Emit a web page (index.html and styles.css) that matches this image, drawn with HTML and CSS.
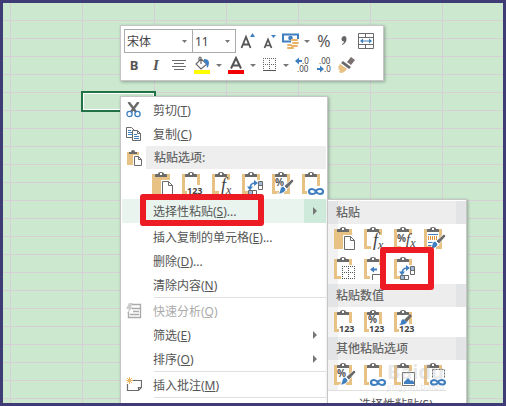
FILE: index.html
```html
<!DOCTYPE html>
<html lang="zh-CN">

<head>
    <meta charset="UTF-8">
    <meta name="viewport" content="width=device-width, initial-scale=1.0">
    <title>选择性粘贴</title>
    <link rel="stylesheet" href="styles.css">
</head>

<body>
    <!-- Shared icon parts -->
    <svg class="defs" width="0" height="0" aria-hidden="true">
        <symbol id="board" viewBox="0 0 24 24">
            <path d="M5 3.500H1.500V20.500H7M13 3.500H16.500V20.500H12" fill="none" stroke="#e8c184" stroke-width="3" />
            <rect x="3" y="5" width="12" height="14" fill="#fff" />
            <path d="M3 5V3q0-1 1-1h2q0-2 3-2t3 2h2q1 0 1 1v2z" fill="#6a6a6a" />
            <rect x="8" y="1" width="2" height="2" fill="#fff" />
        </symbol>
        <symbol id="paste" viewBox="0 0 24 24">
            <path d="M0 2h18v20H0z" fill="#e8c184" />
            <path d="M3 5V3q0-1 1-1h2q0-2 3-2t3 2h2q1 0 1 1v2z" fill="#6a6a6a" />
            <rect x="8" y="1" width="2" height="2" fill="#fff" />
            <path d="M9 8h12v16H9z" fill="#fff" />
            <path d="M10.500 9.500h6l4 4v9h-10zM16.500 9.500v4h4" fill="#fff" stroke="#6a6a6a" />
        </symbol>
        <symbol id="transpose" viewBox="0 0 24 24">
            <use href="#board" />
            <path d="M6 8h16v16H6z" fill="#fff" />
            <path d="M8 17q0-6 5-6" fill="none" stroke="#3f7fbf" stroke-width="1.600" />
            <path d="M5 14.500h6l-3 4zM12 8v6l4-3z" fill="#3f7fbf" />
            <path d="M16.500 9.500h4v8h-4zM6.500 18.500h8v4h-8z" fill="#fff" stroke="#6a6a6a" />
            <path d="M17 10h3v3h-3zM7 19h3v3H7z" fill="#9dbbd8" />
            <path d="M16.500 13.500h4M10.500 18.500v4" stroke="#6a6a6a" />
        </symbol>
        <symbol id="brush" viewBox="0 0 24 24">
            <path d="M20 7l2 2-7 8-3-3z" fill="#6a6a6a" stroke="#fff" stroke-width=".8" />
            <path d="M11 14l3 3q-1 5-9 5 3-1 3-4 0-3 3-4z" fill="#3f7fbf" stroke="#fff" stroke-width=".8" />
        </symbol>
        <symbol id="link" viewBox="0 0 24 24">
            <use href="#board" />
            <path d="M5 14h17v10H5z" fill="#fff" />
            <path d="M14 20.500q-1.500 1.500-4 1.500-3 0-3-2.500T10 17q2 0 4 2.500 1.500 2.500 4 2.500 3 0 3-2.500T18 17q-2.500 0-4 1.500" fill="none" stroke="#3f7fbf" stroke-width="2.200" />
        </symbol>
        <symbol id="keep-source" viewBox="0 0 24 24">
            <use href="#board" />
            <path d="M4 7.500h10M4 15.500h8M4 18.500h5" stroke="#3f7fbf" />
            <path d="M4 10h10M4 12h10" stroke="#e0923a" stroke-width="2" stroke-dasharray="1 1" />
            <use href="#brush" />
        </symbol>
        <symbol id="no-border" viewBox="0 0 24 24">
            <use href="#board" />
            <path d="M7 8h15v16H7z" fill="#fff" />
            <path d="M8 9.500h13M8 15.500h13M8 21.500h13M8.500 9v13M14.500 9v13M20.500 9v13" stroke="#555" stroke-dasharray="1 1" />
        </symbol>
        <symbol id="col-width" viewBox="0 0 24 24">
            <use href="#board" />
            <path d="M6 8h16v16H6z" fill="#fff" />
            <path d="M8 12.500h5M16 12.500h5" stroke="#3f7fbf" stroke-width="2" />
            <path d="M6 12.500l4-3v6zM22 12.500l-4-3v6z" fill="#3f7fbf" />
            <path d="M8.500 23v-5.500h12V23" fill="none" stroke="#6a6a6a" />
        </symbol>
        <symbol id="small-brush" viewBox="0 0 24 24">
            <path d="M16 4l2 2-5 6-3-2z" fill="#6a6a6a" />
            <path d="M9 9l4 3q-1 3-8 3 2-1 2-3 0-2 2-3z" fill="#3f7fbf" />
        </symbol>
        <symbol id="picture" viewBox="0 0 24 24">
            <use href="#board" />
            <path d="M7 8h14v16H7z" fill="#fff" />
            <path d="M8.500 9.500h12v13h-12z" fill="#fff" stroke="#6a6a6a" />
            <path d="M10 21v-2l4-4 3 3 1-1 2 2v2z" fill="#3f7fbf" />
        </symbol>
        <symbol id="picture-link" viewBox="0 0 24 24">
            <use href="#board" />
            <path d="M8.500 6.500h12v10h-12z" fill="#fff" stroke="#6a6a6a" stroke-dasharray="2 1" />
            <path d="M5 15h17v9H5z" fill="#fff" />
            <path d="M14 20q-1.500 1.500-4 1.500-3 0-3-2T10 17q2 0 4 2.200 1.500 2.300 4 2.300 3 0 3-2T18 17q-2.500 0-4 1.500" fill="none" stroke="#3f7fbf" stroke-width="2.200" />
        </symbol>
    </svg>

    <main class="sheet">
        <div class="active-cell"></div>

        <div class="toolbar">
            <div class="toolbar-row">
                <select class="font-name" aria-label="字体">
                    <option>宋体</option>
                </select>
                <select class="font-size" aria-label="字号">
                    <option>11</option>
                </select>
                <button class="w24" aria-label="增大字号">
                    <svg width="16" height="18" viewBox="0 0 16 18"><path d="M1.500 16L6 5 10.500 16M3.500 12.500h5" fill="none" stroke="#555" stroke-width="1.800" /><path d="M10 5l2.500-4L15 5z" fill="#3f7fbf" /></svg>
                </button>
                <button class="w20" aria-label="减小字号">
                    <svg width="16" height="18" viewBox="0 0 16 18"><path d="M2.500 16L6 7.500 9.500 16M4 13.500h4" fill="none" stroke="#555" stroke-width="1.700" /><path d="M9 3h5l-2.500 3z" fill="#3f7fbf" /></svg>
                </button>
                <button class="w22" aria-label="会计数字格式">
                    <svg width="18" height="18" viewBox="0 0 18 18"><path d="M1 2.500h15v7H1z" fill="#fff" stroke="#3f7fbf" stroke-width="2" /><circle cx="8.500" cy="6" r="2.300" fill="#3f7fbf" /><path d="M9 7h8v11H4v-6h5z" fill="#fff" /><g fill="#e8b365"><rect x="9" y="7" width="7" height="2" rx="1" /><rect x="10" y="10" width="7" height="2" rx="1" /><rect x="9" y="13" width="7" height="2" rx="1" /><rect x="5" y="12" width="5" height="2" rx="1" /><rect x="5" y="15" width="7" height="2" rx="1" /></g></svg>
                </button>
                <button class="w10 caret" aria-label="更多货币"></button>
                <button class="w24 sign">%</button>
                <button class="w16" aria-label="千位分隔">
                    <svg width="8" height="12" viewBox="0 0 8 12"><path d="M4 1q2.500 0 2.500 3Q6.500 8 2 10V9q2-1 2-2.500Q1.500 6.500 1.500 4T4 1z" fill="#666" /></svg>
                </button>
                <button class="w28" aria-label="合并后居中">
                    <svg width="16" height="16" viewBox="0 0 16 16"><path d="M.5.5h15v15H.5zM.5 4.500h15M.5 11.500h15M7.500.5v4M7.500 11.500v4" fill="none" stroke="#6a6a6a" /><path d="M2 8l3-2.500v2h6v-2L14 8l-3 2.500v-2H5v2z" fill="#3f7fbf" /></svg>
                </button>
            </div>
            <div class="toolbar-row">
                <button class="w20 bold">B</button>
                <button class="w24 italic">I</button>
                <button class="w22" aria-label="居中">
                    <svg width="14" height="12" viewBox="0 0 14 12"><path d="M0 1.500h14M2 4.500h10M0 7.500h14M2 10.500h10" stroke="#6a6a6a" /></svg>
                </button>
                <button class="w24" aria-label="填充颜色">
                    <svg width="16" height="18" viewBox="0 0 16 18"><path d="M7 3l6 5-6 5-5-5zM7 8V1.500q-2-1-2 1V6" fill="#fff" stroke="#6a6a6a" stroke-width="1.200" /><path d="M10 3q5 0 5 4 0 3-2 5 0-4-3-6z" fill="#3f7fbf" /><path d="M0 14h16v4H0z" fill="#ff0" /></svg>
                </button>
                <button class="w10 caret" aria-label="更多填充颜色"></button>
                <button class="w24" aria-label="字体颜色">
                    <svg width="16" height="18" viewBox="0 0 16 18"><path d="M3 12.500L8 2l5 10.500M5 9.500h6" fill="none" stroke="#555" stroke-width="2" /><path d="M0 14h16v4H0z" fill="#f00000" /></svg>
                </button>
                <button class="w10 caret" aria-label="更多字体颜色"></button>
                <button class="w22" aria-label="边框">
                    <svg width="13" height="14" viewBox="0 0 13 14"><path d="M0 .5h13M0 6.500h13M.5 0v12M6.500 0v12M12.500 0v12" stroke="#666" stroke-dasharray="1 1" /><path d="M0 12.500h13" stroke="#555" /></svg>
                </button>
                <button class="w12 caret" aria-label="更多边框"></button>
                <button class="w22" aria-label="增加小数位数">
                    <svg width="18" height="16" viewBox="0 0 18 16"><path d="M4 4h4" stroke="#3f7fbf" stroke-width="2" /><path d="M1 4l4-3.500v7z" fill="#3f7fbf" /><text x="8" y="7" class="decimals">.0</text><text x="3" y="15" class="decimals">.00</text></svg>
                </button>
                <button class="w22" aria-label="减少小数位数">
                    <svg width="18" height="16" viewBox="0 0 18 16"><path d="M1 12h4" stroke="#3f7fbf" stroke-width="2" /><path d="M8 12L4 8.500v7z" fill="#3f7fbf" /><text x="3" y="7" class="decimals">.00</text><text x="8" y="15" class="decimals">.0</text></svg>
                </button>
                <button class="w22" aria-label="格式刷">
                    <svg width="18" height="16" viewBox="0 0 18 16"><path d="M13 0l4 3-4 5-4-3z" fill="#7a7070" /><path d="M5 4l8 6-2 2-8-6z" fill="#6a6a6a" /><path d="M2 7l7 5q-3 4-6 4l-2-1 1-2-2-1 1-1-1-1q1-1 2-3z" fill="#e8c184" /></svg>
                </button>
            </div>
        </div>

        <div class="menu">
            <button class="item">
                <span class="icon"><svg width="16" height="16" viewBox="0 0 16 16"><path d="M2.500 0L10 10M12.500 0L5 10" stroke="#6a6a6a" stroke-width="2.400" /><circle cx="3.500" cy="12" r="2.600" fill="#fff" stroke="#3f7fbf" stroke-width="1.300" /><circle cx="11.500" cy="12" r="2.600" fill="#fff" stroke="#3f7fbf" stroke-width="1.300" /></svg></span>
                <span>剪切(<u>T</u>)</span>
            </button>
            <button class="item">
                <span class="icon"><svg width="16" height="16" viewBox="0 0 16 16"><path d="M.5 1.500h5l3 3v7h-8z" fill="#fff" stroke="#6a6a6a" /><path d="M2 4.500h3M2 6.500h4M2 8.500h4" stroke="#3f7fbf" /><path d="M6.500 4.500h5l3 3v7h-8zM11.500 4.500v3h3" fill="#fff" stroke="#6a6a6a" /><path d="M8 8.500h3M8 10.500h5M8 12.500h5" stroke="#3f7fbf" /></svg></span>
                <span>复制(<u>C</u>)</span>
            </button>
            <div class="item paste-title">
                <span class="icon"><svg width="16" height="16" viewBox="0 0 16 16"><path d="M1 2h12v13H1z" fill="#e8c184" /><path d="M3 4V2h2q0-2 2-2t2 2h2v2z" fill="#6a6a6a" /><path d="M7 5h9v11H7z" fill="#fff" /><path d="M8.500 6.500h4l3 3v6h-7zM12.500 6.500v3h3" fill="#fff" stroke="#6a6a6a" /></svg></span>
                <span class="label">粘贴选项:</span>
            </div>
            <div class="icon-row">
                <button aria-label="粘贴"><svg><use href="#paste" /></svg></button>
                <button aria-label="值"><svg><use href="#board" /><path d="M5 13h17v11H5z" fill="#fff" /><text x="5" y="22" class="digits">123</text></svg></button>
                <button aria-label="公式"><svg><use href="#board" /><path d="M8 8h14v16H8z" fill="#fff" /><text x="9" y="19" class="fx">f<tspan dy="3" class="fx-small">x</tspan></text></svg></button>
                <button aria-label="转置"><svg><use href="#transpose" /></svg></button>
                <button aria-label="格式"><svg><use href="#board" /><text x="3" y="14" class="percent">%</text><use href="#brush" /></svg></button>
                <button aria-label="粘贴链接"><svg><use href="#link" /></svg></button>
            </div>
            <button class="item selected">
                <span class="icon"></span>
                <span>选择性粘贴(<u>S</u>)...</span>
                <span class="arrow"></span>
            </button>
            <button class="item"><span class="icon"></span><span>插入复制的单元格(<u>E</u>)...</span></button>
            <button class="item"><span class="icon"></span><span>删除(<u>D</u>)...</span></button>
            <button class="item"><span class="icon"></span><span>清除内容(<u>N</u>)</span></button>
            <hr>
            <button class="item" disabled>
                <span class="icon"><svg width="16" height="16" viewBox="0 0 16 16"><path d="M6 1.500h8.500v13h-12V9M6 5.500h8M7 8.500h6M4 11.500h9" fill="none" stroke="#aaa" stroke-width="1.400" /><path d="M3 0h4L5 4h2L1 11l2-5H0z" fill="#ccc" /></svg></span>
                <span>快速分析(<u>Q</u>)</span>
            </button>
            <button class="item"><span class="icon"></span><span>筛选(<u>E</u>)</span><span class="arrow"></span></button>
            <button class="item"><span class="icon"></span><span>排序(<u>O</u>)</span><span class="arrow"></span></button>
            <hr>
            <button class="item">
                <span class="icon"><svg width="16" height="16" viewBox="0 0 16 16"><path d="M7 3.500h8.500v7l-3 3H1.500V7M15.500 10.500h-3v3" fill="none" stroke="#6a6a6a" stroke-width="1.200" /><path d="M3.500 0v7M0 3.500h7M1 1l5 5M6 1L1 6" stroke="#e8b365" /></svg></span>
                <span>插入批注(<u>M</u>)</span>
            </button>
            <hr>
        </div>

        <div class="submenu">
            <h2>粘贴</h2>
            <div class="icon-row">
                <button aria-label="粘贴"><svg><use href="#paste" /></svg></button>
                <button aria-label="公式"><svg><use href="#board" /><path d="M8 8h14v16H8z" fill="#fff" /><text x="9" y="19" class="fx">f<tspan dy="3" class="fx-small">x</tspan></text></svg></button>
                <button aria-label="公式和数字格式"><svg><use href="#board" /><path d="M14 8h8v16h-8z" fill="#fff" /><text x="3" y="15" class="percent">%<tspan dy="2" class="fx-mid">f</tspan><tspan dy="3" class="fx-small">x</tspan></text></svg></button>
                <button aria-label="保留源格式"><svg><use href="#keep-source" /></svg></button>
                <button aria-label="无边框"><svg><use href="#no-border" /></svg></button>
                <button aria-label="保留源列宽"><svg><use href="#col-width" /></svg></button>
                <button aria-label="转置"><svg><use href="#transpose" /></svg></button>
            </div>
            <h2>粘贴数值</h2>
            <div class="icon-row">
                <button aria-label="值"><svg><use href="#board" /><path d="M5 13h17v11H5z" fill="#fff" /><text x="5" y="22" class="digits">123</text></svg></button>
                <button aria-label="值和数字格式"><svg><use href="#board" /><path d="M5 14h17v10H5z" fill="#fff" /><text x="4" y="13" class="percent">%</text><text x="5" y="22" class="digits">123</text></svg></button>
                <button aria-label="值和源格式"><svg><use href="#board" /><path d="M5 14h17v10H5z" fill="#fff" /><use href="#small-brush" /><text x="5" y="22" class="digits">123</text></svg></button>
            </div>
            <h2>其他粘贴选项</h2>
            <div class="icon-row">
                <button aria-label="格式"><svg><use href="#board" /><text x="3" y="14" class="percent">%</text><use href="#brush" /></svg></button>
                <button aria-label="粘贴链接"><svg><use href="#link" /></svg></button>
                <button aria-label="图片"><svg><use href="#picture" /></svg></button>
                <button aria-label="链接的图片"><svg><use href="#picture-link" /></svg></button>
            </div>
            <hr>
            <button class="item"><span class="icon"></span><span>选择性粘贴(<u>S</u>)...</span></button>
        </div>

        <div class="marker marker-item"></div>
        <div class="marker marker-icon"></div>
        <div class="watermark"><b>Baidu</b><small>jingyan.baidu</small></div>
    </main>
</body>

</html>
```
FILE: styles.css
```css
* {
    box-sizing: border-box;
}

body {
    margin: 0;
    font-family: "Noto Sans", "Noto Sans CJK SC", sans-serif;
    font-size: 12px;
    color: #555;
}

.defs {
    position: absolute;
}

/* Spreadsheet with 72x18 cells */
.sheet {
    position: relative;
    height: 100vh;
    overflow: hidden;
    border: 3px solid #3f3b74;
    background-color: #cce8cf;
    background-image:
        linear-gradient(to right, #d6d0d6 1px, transparent 1px),
        linear-gradient(to bottom, #d6d0d6 1px, transparent 1px);
    background-size: 72px 18px;
    background-position: 7px 17px;
}

.active-cell {
    position: absolute;
    left: 78px;
    top: 88px;
    width: 75px;
    height: 21px;
    border: 2px solid #217346;
    box-shadow: inset 0 0 0 1px #fff;
}

button {
    display: flex;
    align-items: center;
    justify-content: center;
    padding: 0;
    border: none;
    background: none;
    font: inherit;
    color: inherit;
}

/* Mini toolbar */
.toolbar {
    position: absolute;
    left: 117px;
    top: 22px;
    padding: 3px;
    background: white;
    border: 1px solid #c6c6c6;
    box-shadow: 1px 1px 3px rgba(0, 0, 0, 0.3);
}

.toolbar-row {
    display: flex;
    height: 24px;
}

select {
    appearance: none;
    height: 24px;
    padding: 0 2px;
    border: 1px solid #ababab;
    border-radius: 0;
    font: inherit;
    color: #444;
    background: url("data:image/svg+xml,%3Csvg xmlns='http://www.w3.org/2000/svg' width='5' height='3'%3E%3Cpath d='M0 0h5L2.500 3z' fill='%23777'/%3E%3C/svg%3E") no-repeat right 5px center white;
}

.font-name {
    width: 69px;
}

.font-size {
    width: 44px;
    margin-left: -1px;
}

.w10 { width: 10px; }
.w12 { width: 12px; }
.w16 { width: 16px; }
.w20 { width: 20px; }
.w22 { width: 22px; }
.w24 { width: 24px; }
.w28 { width: 28px; }

.caret::before {
    content: "";
    border: 3px solid transparent;
    border-top-color: #777;
    border-bottom: 0;
}

.sign {
    font-size: 16px;
}

.bold {
    font-size: 13px;
    font-weight: bold;
}

.italic {
    font: italic bold 15px "Liberation Serif", serif;
}

.decimals {
    font: 8px "Noto Sans", sans-serif;
    fill: #444;
}

/* Context menu */
.menu,
.submenu {
    position: absolute;
    background: white;
    border: 1px solid #c6c6c6;
    box-shadow: 1px 1px 3px rgba(0, 0, 0, 0.3);
}

.menu {
    left: 117px;
    top: 93px;
    width: 208px;
    height: 360px;
    padding: 1px;
}

.item {
    display: flex;
    align-items: center;
    justify-content: flex-start;
    width: 100%;
    height: 24px;
    white-space: nowrap;
}

.item:disabled {
    color: #aaa;
}

.item .icon {
    display: flex;
    justify-content: center;
    width: 24px;
    margin-right: 7px;
}

.item .arrow {
    display: flex;
    align-items: center;
    justify-content: center;
    width: 22px;
    height: 100%;
    margin-left: auto;
}

.arrow::before {
    content: "";
    border: 4px solid transparent;
    border-left-color: #777;
    border-right: 0;
}

.item.paste-title {
    height: 23px;
}

.paste-title .icon {
    margin-right: 0;
}

.paste-title .label {
    flex: 1;
    padding-left: 8px;
    line-height: 23px;
    background: #eee;
    color: #666;
    font-weight: 500;
}

.item.selected {
    margin-bottom: 2px;
    background: #e9f4ef;
}

.selected .arrow {
    background: #cdeadb;
}

hr {
    margin: 0 0 1px 32px;
    border: none;
    border-top: 1px solid #e0e0e0;
}

.icon-row {
    display: flex;
    flex-wrap: wrap;
    padding-left: 30px;
}

.icon-row button {
    flex: none;
    width: 30px;
    height: 30px;
    justify-content: flex-start;
}

.icon-row svg {
    width: 24px;
    height: 24px;
}

.menu .icon-row {
    flex-wrap: nowrap;
}

/* Paste special submenu */
.submenu {
    left: 324px;
    top: 196px;
    width: 140px;
    height: 240px;
    padding-top: 1px;
}

.submenu h2 {
    margin: 0;
    padding-left: 8px;
    color: #666;
    font-size: 12px;
    font-weight: 500;
    line-height: 23px;
    background: linear-gradient(to right, #e2e4e6 10px, #ededed 10px, #ededed 128px, #e2e4e6 128px);
}

.submenu .icon-row {
    padding-left: 6px;
    background: linear-gradient(to right, #f2f2f2 10px, transparent 10px);
}

.submenu hr {
    margin: 0 20px 1px 0;
}

/* Red highlight frames */
.marker {
    position: absolute;
    border: 6px solid #ed1c24;
    border-radius: 3px;
}

.marker-item {
    left: 137px;
    top: 191px;
    width: 124px;
    height: 32px;
}

.marker-icon {
    left: 377px;
    top: 244px;
    width: 54px;
    height: 43px;
}

.watermark {
    position: absolute;
    left: 384px;
    top: 359px;
    color: rgba(190, 190, 190, 0.35);
}

.watermark b,
.watermark small {
    display: block;
}

.watermark b {
    font-size: 20px;
    line-height: 20px;
}

.watermark small {
    font-size: 9px;
    line-height: 10px;
}

/* Lettering inside the paste icons */
.digits {
    font: bold 9px "Noto Sans", sans-serif;
    fill: #444;
}

.percent {
    font: bold 10px "Noto Sans", sans-serif;
    fill: #555;
}

.fx {
    font: italic 18px "Liberation Serif", serif;
    fill: #444;
}

.fx-mid {
    font: italic 15px "Liberation Serif", serif;
    fill: #444;
}

.fx-small {
    font: italic 12px "Liberation Serif", serif;
    fill: #444;
}
```
